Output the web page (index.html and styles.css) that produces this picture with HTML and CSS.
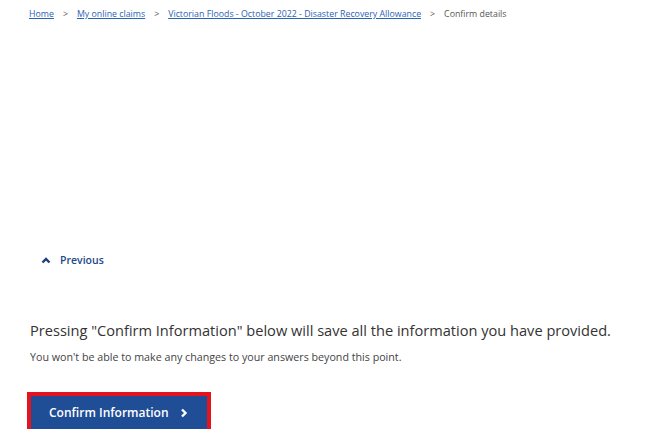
FILE: index.html
```html
<!DOCTYPE html>
<html lang="en">
<head>
  <meta charset="UTF-8" />
  <meta name="viewport" content="width=device-width, initial-scale=1.0" />
  <title>Confirm details</title>
  <link rel="stylesheet" href="styles.css">
</head>
<body>
  <nav class="breadcrumbs">
    <a href="#">Home</a>
    <span class="sep">&gt;</span>
    <a href="#">My online claims</a>
    <span class="sep">&gt;</span>
    <a href="#">Victorian Floods - October 2022 - Disaster Recovery Allowance</a>
    <span class="sep">&gt;</span>
    <span class="current">Confirm details</span>
  </nav>

  <main class="content">
    <a class="previous" href="#">
      <svg width="10" height="8" viewBox="0 0 10 8"><path d="M1.5 6.5 L5 3 L8.5 6.5" fill="none" stroke="#1d3f7a" stroke-width="2.4"/></svg>
      Previous
    </a>

    <p class="lead">Pressing "Confirm Information" below will save all the information you have provided.</p>
    <p class="note">You won't be able to make any changes to your answers beyond this point.</p>

    <button class="confirm">
      Confirm Information
      <svg width="8" height="10" viewBox="0 0 8 10"><path d="M2 1.5 L5.5 5 L2 8.5" fill="none" stroke="white" stroke-width="2.4"/></svg>
    </button>
  </main>
</body>
</html>
```

FILE: styles.css
```css
body {
  margin: 0;
  font-family: 'Open Sans', sans-serif;
  color: #333;
  background: white;
}
.breadcrumbs {
  display: flex;
  align-items: center;
  gap: 9px;
  padding: 6px 0 0 29px;
  font-size: 8.8px;
  height: 16px;
}
.breadcrumbs a {
  color: #2b63b5;
}
.breadcrumbs .sep,
.breadcrumbs .current {
  color: #555;
}
.content {
  padding: 231px 0 0 30px;
}
.previous {
  display: flex;
  align-items: center;
  gap: 9px;
  margin-left: 11px;
  color: #1d4a8a;
  font-weight: 600;
  font-size: 10.5px;
  text-decoration: none;
}
.lead {
  margin: 53px 0 0;
  font-size: 14.6px;
}
.note {
  margin: 10px 0 0;
  font-size: 10.7px;
  color: #444;
}
.confirm {
  display: flex;
  align-items: center;
  margin: 32px 0 0 1px;
  padding: 0 19px 0 18px;
  height: 33px;
  width: 176px;
  background: #1f4d96;
  color: white;
  border: none;
  outline: 4px solid #e4141e;
  font-family: inherit;
  font-weight: 600;
  font-size: 12px;
  white-space: nowrap;
}
.confirm svg {
  margin-left: auto;
}
```
